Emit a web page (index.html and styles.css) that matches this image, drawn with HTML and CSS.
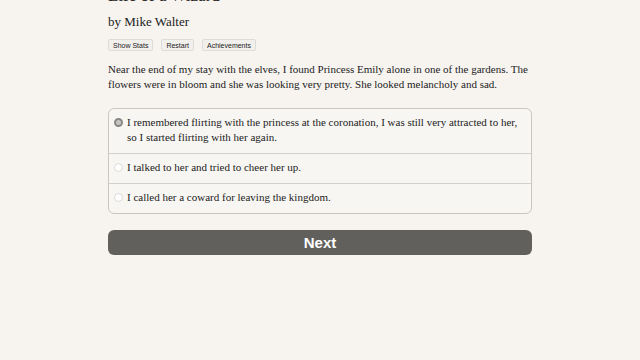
FILE: index.html
```html
<!DOCTYPE html>
<html lang="en">
<head>
    <meta charset="UTF-8">
    <title>Life of a Wizard</title>
    <link rel="stylesheet" href="styles.css">
</head>
<body>
    <div class="container">
        <h1 class="title">Life of a Wizard</h1>
        <div class="author">by Mike Walter</div>
        <div class="buttons">
            <button class="small-btn">Show Stats</button>
            <button class="small-btn">Restart</button>
            <button class="small-btn">Achievements</button>
        </div>
        <p class="story">Near the end of my stay with the elves, I found Princess Emily alone in one of the gardens. The flowers were in bloom and she was looking very pretty. She looked melancholy and sad.</p>
        <form class="choices">
            <label class="choice">
                <span class="radio checked"></span>
                <span>I remembered flirting with the princess at the coronation, I was still very attracted to her, so I started flirting with her again.</span>
            </label>
            <label class="choice">
                <span class="radio"></span>
                <span>I talked to her and tried to cheer her up.</span>
            </label>
            <label class="choice">
                <span class="radio"></span>
                <span>I called her a coward for leaving the kingdom.</span>
            </label>
        </form>
        <button class="next-btn">Next</button>
    </div>
</body>
</html>
```
FILE: styles.css
```css
body {
    margin: 0;
    background: #f7f4f0;
    font-family: 'Liberation Serif', serif;
    color: #222;
}

.container {
    width: 424px;
    margin: 0 auto;
}

.title {
    margin: -14px 0 0 0;
    font-size: 17px;
    font-weight: normal;
    line-height: 20px;
}

.author {
    margin-top: 8px;
    font-size: 13px;
    line-height: 16px;
}

.buttons {
    display: flex;
    gap: 8px;
    margin-top: 9px;
}

.small-btn {
    font-family: 'Liberation Sans', sans-serif;
    font-size: 7px;
    padding: 1px 4px;
    height: 12px;
    line-height: 9px;
    background: #f2f0ed;
    border: 1px solid #dedcd8;
    border-radius: 2px;
    color: #222;
}

.story {
    margin: 11px 0 0 0;
    font-size: 11px;
    line-height: 15px;
}

.choices {
    margin-top: 16px;
    border: 1px solid #c9c6c2;
    border-radius: 6px;
    background: #f8f6f3;
}

.choice {
    display: flex;
    align-items: flex-start;
    padding: 6px 6px 8px 5px;
    font-size: 11px;
    line-height: 15px;
    border-top: 1px solid #d3d0cc;
}

.choice:first-child {
    border-top: none;
}

.radio {
    flex: none;
    box-sizing: border-box;
    width: 9px;
    height: 9px;
    margin: 3px 4px 0 0;
    border-radius: 50%;
    border: 1px solid #dddad6;
    background: #fff;
}

.radio.checked {
    border: 2px solid #8a8885;
    background: #c7c5c2;
}

.next-btn {
    display: block;
    width: 100%;
    height: 25px;
    margin-top: 16px;
    background: #62605d;
    border: none;
    border-radius: 6px;
    color: #fff;
    font-family: 'Liberation Sans', sans-serif;
    font-weight: bold;
    font-size: 15px;
}
```
